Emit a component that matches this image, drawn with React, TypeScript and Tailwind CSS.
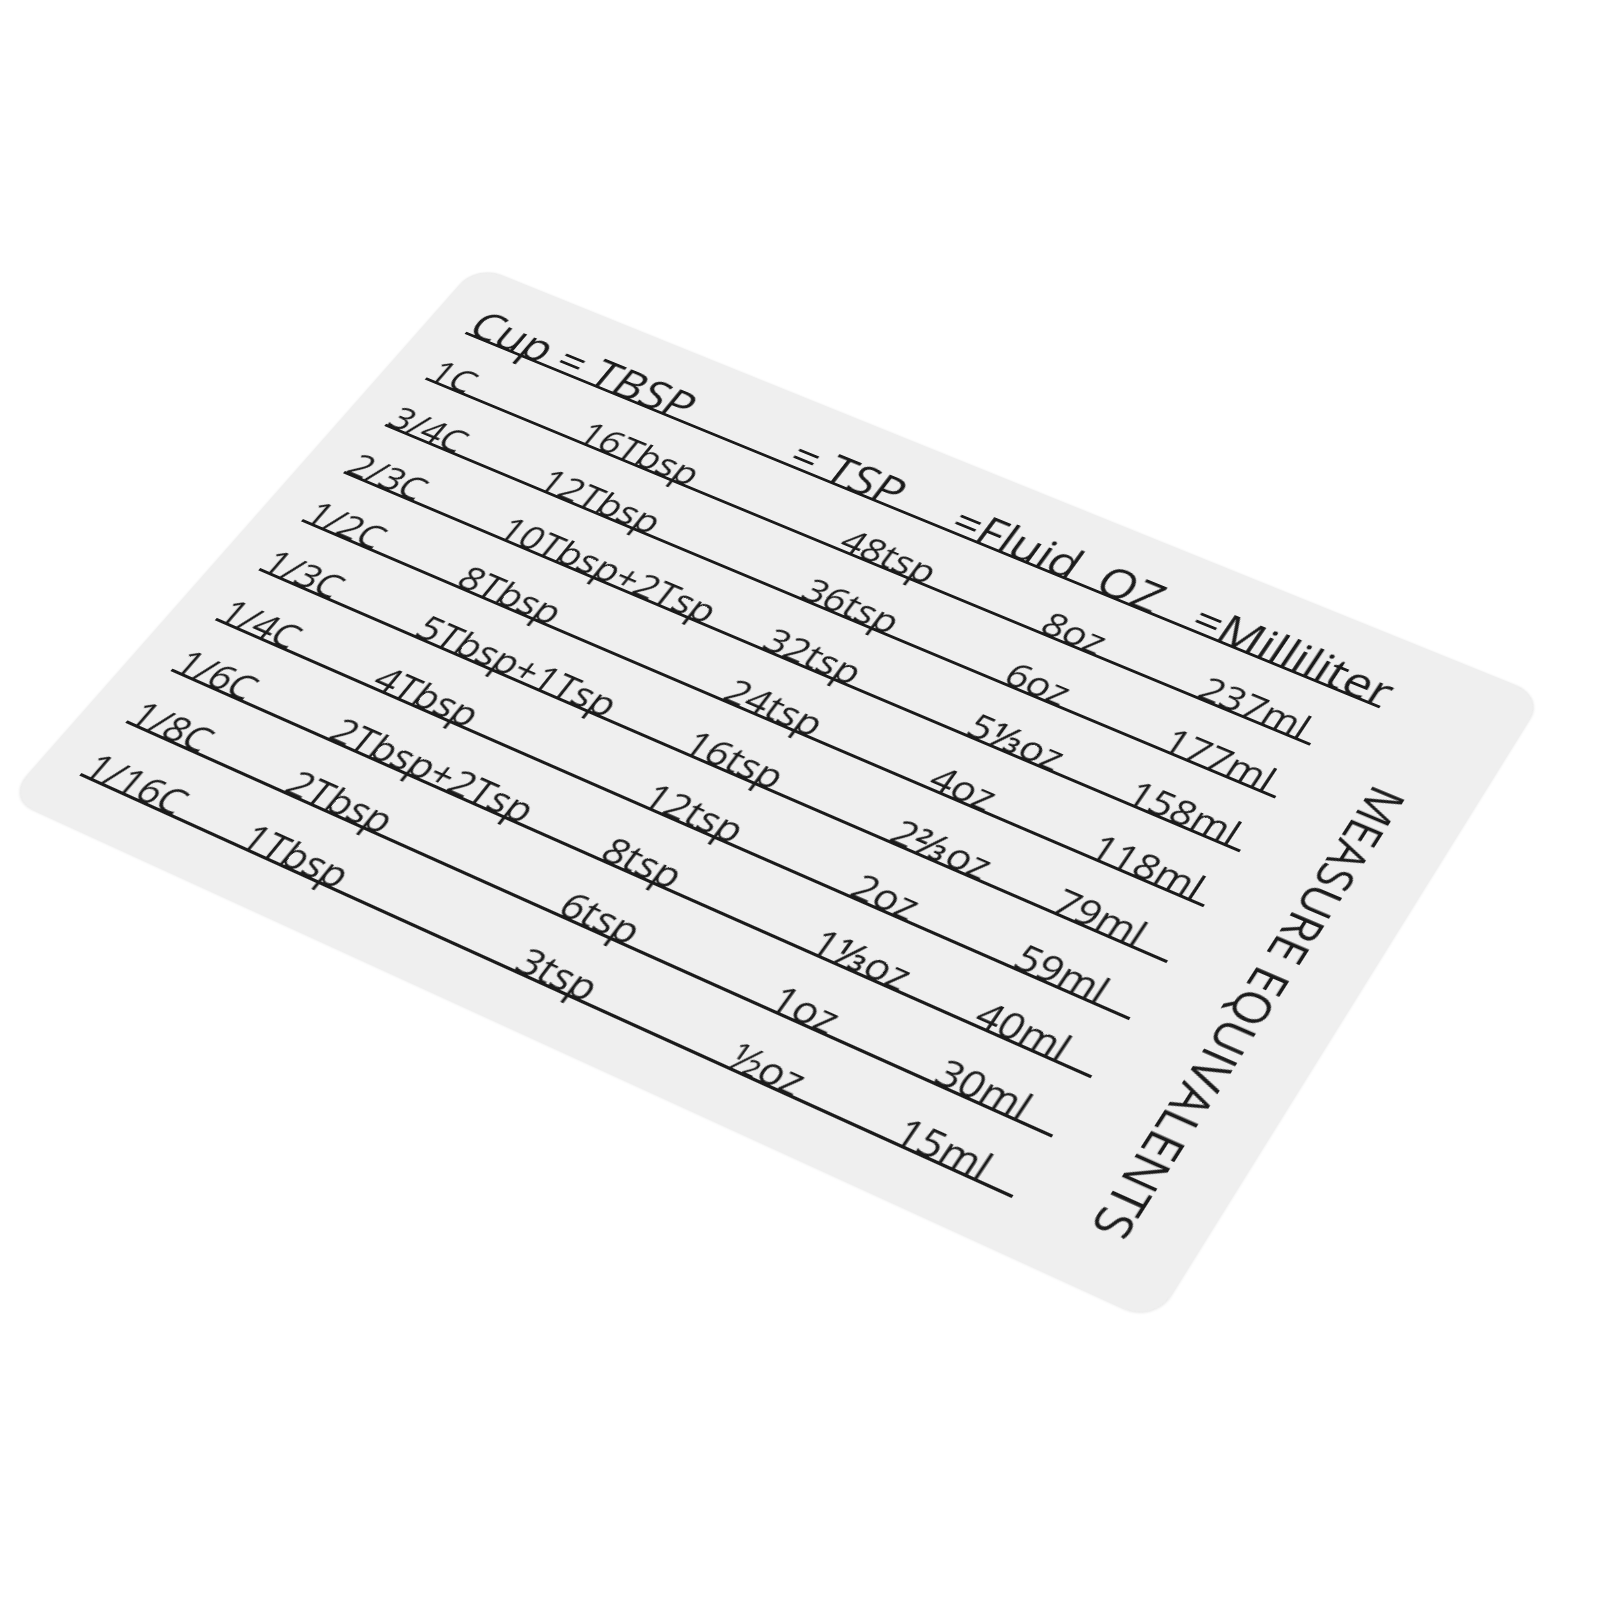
import React from "react"

// flat card size, then mapped onto the photographed card outline
const W = 1120
const H = 700
const CORNERS = [
  [477, 266],
  [1543, 697],
  [1154, 1322],
  [8, 798],
]

// homography from the flat card to the four corners above
function cardTransform(): string {
  const [[x0, y0], [x1, y1], [x2, y2], [x3, y3]] = CORNERS
  const dx1 = x1 - x2
  const dx2 = x3 - x2
  const dx3 = x0 - x1 + x2 - x3
  const dy1 = y1 - y2
  const dy2 = y3 - y2
  const dy3 = y0 - y1 + y2 - y3
  const den = dx1 * dy2 - dx2 * dy1
  const g = (dx3 * dy2 - dx2 * dy3) / den
  const h = (dx1 * dy3 - dx3 * dy1) / den
  const a = x1 - x0 + g * x1
  const b = x3 - x0 + h * x3
  const d = y1 - y0 + g * y1
  const e = y3 - y0 + h * y3
  const m = [a / W, d / W, 0, g / W, b / H, e / H, 0, h / H, 0, 0, 1, 0, x0, y0, 0, 1]
  return `matrix3d(${m.join(",")})`
}

const header = ["Cup = TBSP", "= TSP", "=Fluid  OZ", "=Milliliter"]

const rows = [
  ["1C", "16Tbsp", "48tsp", "8oz", "237ml"],
  ["3/4C", "12Tbsp", "36tsp", "6oz", "177ml"],
  ["2/3C", "10Tbsp+2Tsp", "32tsp", "5⅓oz", "158ml"],
  ["1/2C", "8Tbsp", "24tsp", "4oz", "118ml"],
  ["1/3C", "5Tbsp+1Tsp", "16tsp", "2⅔oz", "79ml"],
  ["1/4C", "4Tbsp", "12tsp", "2oz", "59ml"],
  ["1/6C", "2Tbsp+2Tsp", "8tsp", "1⅓oz", "40ml"],
  ["1/8C", "2Tbsp", "6tsp", "1oz", "30ml"],
  ["1/16C", "1Tbsp", "3tsp", "½oz", "15ml"],
]

export default function App() {
  return (
    <div className="w-[1600px] h-[1600px] bg-white overflow-hidden font-['Open_Sans','Noto_Sans','DejaVu_Sans',sans-serif] font-medium text-[#1a1a1a]">
      <div
        className="flex w-[1120px] h-[700px] pl-[39px] rounded-[26px] bg-[#efefef] shadow-[0_0_3px_rgba(0,0,0,0.18)] origin-top-left"
        style={{ transform: cardTransform() }}
      >
        <div className="flex flex-col w-[959px] shrink-0">
          <div className="grid grid-cols-[349px_171px_247px_192px] items-end w-[959px] h-[77px] border-b-[3px] border-[#1a1a1a] text-[45px]">
            {header.map((label) => (
              <span key={label} className="leading-none whitespace-pre translate-y-[7px]">
                {label}
              </span>
            ))}
          </div>
          {rows.map((row) => (
            <div
              key={row[0]}
              className="grid grid-cols-[164px_279px_208px_159px_114px] items-end w-[924px] h-[64px] border-b-[3px] border-[#1a1a1a] text-[36px]"
            >
              {row.map((cell, i) => (
                <span key={i} className="leading-none whitespace-nowrap translate-y-[6px]">
                  {cell}
                </span>
              ))}
            </div>
          ))}
        </div>
        <div className="[writing-mode:vertical-rl] ml-[29px] mt-[151px] text-[44px] leading-[44px] whitespace-nowrap">
          MEASURE EQUIVALENTS
        </div>
      </div>
    </div>
  )
}
